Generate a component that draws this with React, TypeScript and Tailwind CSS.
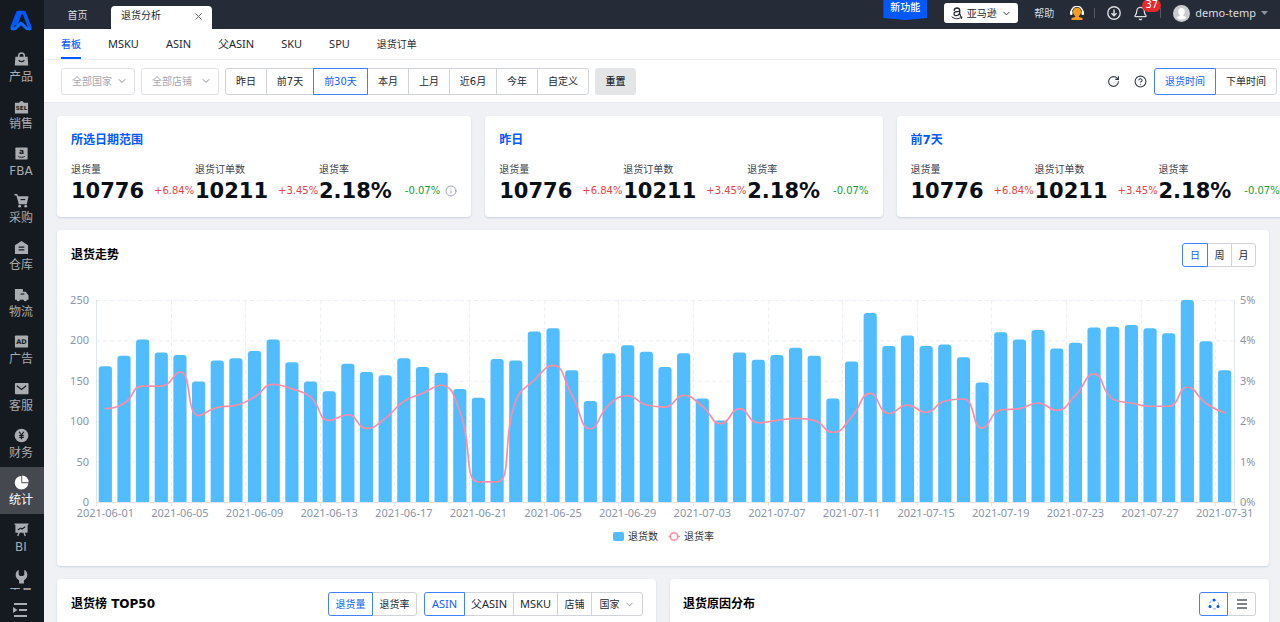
import React, { useState } from "react";
import { CircleHelp, RotateCw, ChevronDown, X, Bell, Info } from "lucide-react";

const BARS = [
  168, 181, 201, 185, 182, 149, 175, 178, 187, 201, 173, 149, 137, 171, 161, 157, 178, 167, 160, 140,
  129, 177, 175, 211, 215, 163, 125, 184, 194, 186, 167, 184, 128, 101, 185, 176, 182, 191, 181, 128,
  174, 234, 193, 206, 193, 195, 179, 148, 210, 201, 213, 190, 197, 216, 217, 219, 215, 209, 250, 199, 163,
];

const RATES = [
  2.31, 2.44, 2.87, 2.87, 3.22, 2.14, 2.34, 2.39, 2.6, 2.91, 2.8, 2.6, 2.02, 2.16, 1.82, 2.07, 2.49, 2.69, 2.89, 2.25,
  0.5, 0.5, 2.5, 3.02, 3.38, 2.66, 1.81, 2.41, 2.63, 2.4, 2.35, 2.64, 2.37, 1.94, 2.31, 1.96, 2.02, 2.07, 2.02, 1.72,
  2.1, 2.69, 2.19, 2.4, 2.22, 2.5, 2.55, 1.83, 2.28, 2.31, 2.45, 2.27, 2.64, 3.17, 2.55, 2.45, 2.37, 2.37, 2.84, 2.44, 2.21,
];

const PLOT = { left: 39, right: 1177, top: 20, bottom: 222 };
const STEP = (PLOT.right - PLOT.left) / BARS.length;

type Point = [number, number];

const clamp = (v: number, a: number, b: number) => Math.max(Math.min(v, Math.max(a, b)), Math.min(a, b));

function smoothPath(points: Point[]): string {
  let d = `M${points[0][0]},${points[0][1]}`;
  let cp0: Point = points[0];
  for (let i = 1; i < points.length; i++) {
    const [x, y] = points[i];
    const prev = points[i - 1];
    const next = points[i + 1];
    let cp1: Point = [x, y];
    let nextCp: Point = [x, y];
    if (next) {
      const lenPrev = Math.hypot(x - prev[0], y - prev[1]);
      const lenNext = Math.hypot(next[0] - x, next[1] - y);
      const ratio = lenNext / (lenNext + lenPrev);
      const nx = clamp(x + (next[0] - prev[0]) * 0.5 * ratio, x, next[0]);
      const ny = clamp(y + (next[1] - prev[1]) * 0.5 * ratio, y, next[1]);
      const cx = clamp(x - ((nx - x) * lenPrev) / lenNext, prev[0], x);
      const cy = clamp(y - ((ny - y) * lenPrev) / lenNext, prev[1], y);
      cp1 = [cx, cy];
      nextCp = [x + ((x - cx) * lenNext) / lenPrev, y + ((y - cy) * lenNext) / lenPrev];
    }
    d += `C${cp0[0]},${cp0[1]} ${cp1[0]},${cp1[1]} ${x},${y}`;
    cp0 = nextCp;
  }
  return d;
}

function dayLabel(index: number): string {
  return new Date(Date.UTC(2021, 5, 1 + index)).toISOString().slice(0, 10);
}

function TrendChart() {
  const height = PLOT.bottom - PLOT.top;
  const points = RATES.map((r, i): Point => [PLOT.left + STEP * (i + 0.5), PLOT.bottom - (r / 5) * height]);
  const ticks = BARS.map((_, i) => i).filter((i) => i % 4 === 0);
  return (
    <svg viewBox="0 0 1212 272" role="img" aria-label="退货走势" className="block w-full font-['Noto_Sans','Noto_Sans_CJK_SC',sans-serif]">
      <g stroke="#eceff8" strokeDasharray="4 3">
        {[0, 1, 2, 3, 4].map((n) => (
          <line key={n} x1={PLOT.left} x2={PLOT.right} y1={PLOT.top + (n * height) / 5 + 0.5} y2={PLOT.top + (n * height) / 5 + 0.5} />
        ))}
        {ticks.slice(1).map((i) => (
          <line key={i} x1={Math.round(PLOT.left + STEP * i) + 0.5} x2={Math.round(PLOT.left + STEP * i) + 0.5} y1={PLOT.top} y2={PLOT.bottom} />
        ))}
      </g>
      <g stroke="#dfe5f1">
        <path fill="none" d={`M${PLOT.left + 0.5},${PLOT.top}V${PLOT.bottom + 4}M${PLOT.right + 0.5},${PLOT.top}V${PLOT.bottom + 4}`} />
        {ticks.slice(1).map((i) => (
          <line key={i} x1={Math.round(PLOT.left + STEP * i) + 0.5} x2={Math.round(PLOT.left + STEP * i) + 0.5} y1={PLOT.bottom} y2={PLOT.bottom + 4} />
        ))}
      </g>
      <g fill="#51bdff">
        {BARS.map((v, i) => {
          const x = PLOT.left + STEP * (i + 0.5) - 6.6;
          const y = PLOT.bottom - (v / 250) * height;
          return <path key={i} d={`M${x},${PLOT.bottom}V${y + 3}q0,-3 3,-3h7.2q3,0 3,3V${PLOT.bottom}z`} />;
        })}
      </g>
      <line x1={PLOT.left} x2={PLOT.right + 1} y1={PLOT.bottom + 0.5} y2={PLOT.bottom + 0.5} stroke="#dfe5f1" />
      <path d={smoothPath(points)} fill="none" stroke="#ff8ca5" strokeWidth="1.7" strokeLinecap="round" />
      <g fill="#8b95a7" fontSize="11">
        {[250, 200, 150, 100, 50, 0].map((v, n) => (
          <text key={v} x={32} y={PLOT.top + (n * height) / 5 + 4} textAnchor="end">{v}</text>
        ))}
        {[5, 4, 3, 2, 1, 0].map((v, n) => (
          <text key={v} x={1183} y={PLOT.top + (n * height) / 5 + 4}>{v}%</text>
        ))}
        {ticks.map((i) => (
          <text key={i} x={PLOT.left + STEP * (i + 0.5)} y={237} textAnchor="middle">{dayLabel(i)}</text>
        ))}
      </g>
      <rect x="556" y="252" width="11" height="9" rx="2" fill="#51bdff" />
      <path d="M611.500,256.500H623" stroke="#ff8ca5" strokeWidth="1.500" />
      <circle cx="617" cy="256.500" r="3.700" fill="#fff" stroke="#ff8ca5" strokeWidth="1.500" />
      <g fill="#333" fontSize="10">
        <text x="571" y="260">退货数</text>
        <text x="627" y="260">退货率</text>
      </g>
    </svg>
  );
}

const dark = "#141a20";

const NAV: { label: string; icon: React.ReactNode }[] = [
  { label: "产品", icon: <><path d="M1.500 5h13l.7 9.500H.8z" fill="currentColor" /><path d="M5 5.500V4a3 3 0 0 1 6 0v1.500" fill="none" stroke="currentColor" strokeWidth="1.600" /><path d="M5 8.500c1 2.500 5 2.500 6 0" fill="none" stroke={dark} strokeWidth="1.300" /></> },
  { label: "销售", icon: <><path d="M1 4h4.500a2.600 2.600 0 0 1 5 0H15v11.500H1z" fill="currentColor" /><text x="8" y="12" textAnchor="middle" fontSize="6" fontWeight="700" fill={dark}>SEL</text></> },
  { label: "FBA", icon: <><rect x="1.500" y="1.500" width="13" height="13" rx="1" fill="currentColor" /><text x="8" y="9" textAnchor="middle" fontSize="8" fontWeight="700" fill={dark}>a</text><path d="M4.500 11c2 1.500 5 1.500 7 0" fill="none" stroke={dark} /></> },
  { label: "采购", icon: <><path d="M.5 1h3l.9 2.500H15.500L14 10.500H4.800L2.500 2.600H.5zM4.800 10.500h9v1.600h-9z" fill="currentColor" /><circle cx="6" cy="14" r="1.500" fill="currentColor" /><circle cx="12.500" cy="14" r="1.500" fill="currentColor" /><path d="M7 7h5" stroke={dark} strokeWidth="1.200" /></> },
  { label: "仓库", icon: <><path d="M1 5.500l7-4.500 7 4.500V15H1z" fill="currentColor" /><path d="M5 7.500h6M5 10.500h6" stroke={dark} strokeWidth="1.300" /></> },
  { label: "物流", icon: <><path d="M1 2h8.500v3h3L15.500 9v4.500H1z" fill="currentColor" /><circle cx="4.500" cy="13.500" r="1.700" fill="currentColor" /><circle cx="12" cy="13.500" r="1.700" fill="currentColor" /><path d="M7 7.500h4" stroke={dark} strokeWidth="1.200" /></> },
  { label: "广告", icon: <><rect x="1" y="1.500" width="14" height="13" rx="1" fill="currentColor" /><text x="8" y="10.500" textAnchor="middle" fontSize="7" fontWeight="700" fill={dark}>AD</text></> },
  { label: "客服", icon: <><rect x="1" y="2" width="14.500" height="12" rx="1" fill="currentColor" /><path d="M3 5l5 4 5-4" fill="none" stroke={dark} strokeWidth="1.300" /></> },
  { label: "财务", icon: <><circle cx="8" cy="8" r="7.300" fill="currentColor" /><path d="M5.500 4L8 7.500 10.500 4M8 7.500V12M5.500 8h5M5.500 10h5" fill="none" stroke={dark} strokeWidth="1.200" /></> },
  { label: "统计", icon: <><path d="M7.800 1v7.700h7.500A7.300 7.300 0 1 1 7.800 1z" fill="currentColor" /><path d="M8.700.5A7 7 0 0 1 15.600 7.700H8.700z" fill="currentColor" /></> },
  { label: "BI", icon: <><path d="M.5 1.500h15v1.500h-1v8.500h-13V3h-1z" fill="currentColor" /><path d="M4 8.500l3-2 1.500 1L12 5" fill="none" stroke={dark} strokeWidth="1.200" /><path d="M5.500 11L4 15M10.500 11l1.500 4" stroke="currentColor" strokeWidth="1.500" /></> },
  { label: "工具", icon: <path d="M5 .8A6.300 6.300 0 0 0 5.400 12v3.500h5.200V12A6.300 6.300 0 0 0 11 .8V6L9.500 7.500h-3L5 6z" fill="currentColor" /> },
];

function Sidebar() {
  return (
    <aside className="flex w-11 shrink-0 flex-col bg-[#141a20] text-[#a9acb0]">
      <a href="#" aria-label="首页" className="flex h-11 shrink-0 justify-center pt-[9px] pr-0.5">
        <svg viewBox="0 0 24 22" className="h-[23px] w-6">
          <path d="M2.800 18.700L9 3h2.300L6.700 15.500" fill="none" stroke="#0058ff" strokeWidth="3.600" strokeLinejoin="round" />
          <path d="M21.200 18.700L15 3h-4l.8 2" fill="none" stroke="#0058ff" strokeWidth="3.600" strokeLinejoin="round" />
          <path d="M3 19.200h3.200L11.300 14.300Q12 13.600 12.700 14.300L17.800 19.200H21" fill="none" stroke="#0c6bff" strokeWidth="3" strokeLinecap="round" strokeLinejoin="round" />
        </svg>
      </a>
      <nav className="min-h-0 flex-1 overflow-hidden">
        {NAV.map((item) => (
          <a
            key={item.label}
            href="#"
            className={`flex h-[47px] flex-col items-center pt-2 pr-0.5 ${item.label === "统计" ? "bg-[#45494f] text-white" : ""}`}
          >
            <svg viewBox="0 0 16 16" className="h-[15px] w-[15px] shrink-0">{item.icon}</svg>
            <span className="text-[12px] leading-5">{item.label}</span>
          </a>
        ))}
      </nav>
      <button aria-label="展开菜单" className="flex h-8 shrink-0 items-center justify-center pt-2 pr-1">
        <svg viewBox="0 0 15 14" className="h-[14px] w-[15px]">
          <path d="M1 1h13M6 7h8M1 13h13" stroke="currentColor" strokeWidth="1.800" />
          <path d="M0 4l4.500 3L0 10z" fill="currentColor" />
        </svg>
      </button>
    </aside>
  );
}

function Header() {
  return (
    <header className="flex h-[29px] shrink-0 items-start bg-[#252b37] text-[10px] text-[#dcdee1]">
      <a href="#" className="flex h-full w-[67px] items-center justify-center pt-0.5">首页</a>
      <div className="mt-1.5 flex h-[23px] w-[101px] items-center justify-between rounded-t-[4px] bg-white pr-2 pb-1 pl-2.5 text-[#222831]">
        <span>退货分析</span>
        <button aria-label="关闭" className="pt-0.5"><X size={11} className="text-[#59606b]" /></button>
      </div>
      <div className="ml-auto flex h-[26px] items-center pr-3">
        <div className="flex h-5 w-11 justify-center self-start bg-[#0058ff] pt-0.5 leading-3 font-medium text-white [clip-path:polygon(0_0,100%_0,100%_90%,50%_100%,0_90%)]">
          新功能
        </div>
        <button className="ml-[17px] flex h-5 w-[74px] items-center justify-center gap-1 rounded-[3px] bg-white text-[#222831]">
          <svg viewBox="0 0 12 13" className="h-[13px] w-3" fill="none" stroke="currentColor" strokeLinecap="round">
            <path d="M3.200 3.300C3.400 1.700 4.500 1 6 1c1.800 0 2.700.8 2.700 2.300v3.500c0 .7.300 1 .8 1.500M8.600 4.300C5 4.200 3 4.900 3 6.700c0 2.600 4.300 2.600 5.600-.4" strokeWidth="1.300" />
            <path d="M1 10c2.700 2.200 6.800 2.300 9.600.3M9.200 9.700l1.800.2-.4 1.700" strokeWidth="1" />
          </svg>
          <span>亚马逊</span>
          <ChevronDown size={11} />
        </button>
        <a href="#" className="ml-4">帮助</a>
        <button aria-label="客服" className="ml-4">
          <svg viewBox="0 0 14 14" className="h-[14px] w-[14px]">
            <path d="M1.300 7.500V6a5.700 5.700 0 0 1 11.400 0v1.500" fill="none" stroke="#fff" strokeWidth="1.300" />
            <rect y="5" width="2.500" height="4" rx="1" fill="#fff" />
            <rect x="11.500" y="5" width="2.500" height="4" rx="1" fill="#fff" />
            <path d="M7 1.800a4 4 0 0 1 4 4c0 2-1 3.400-2.200 4.200v.9l3.700 1V14h-11v-2.100l3.700-1V10C4 9.200 3 7.800 3 5.800a4 4 0 0 1 4-4z" fill="#fb9a1c" />
          </svg>
        </button>
        <span className="ml-2.5 h-2.5 w-px bg-[#535966]" />
        <button aria-label="下载" className="ml-3">
          <svg viewBox="0 0 14 14" className="h-[14px] w-[14px]" fill="none" stroke="currentColor">
            <circle cx="7" cy="7" r="6.200" strokeWidth="1.400" />
            <path d="M7 3.500V9.500M4.500 7.200L7 9.700l2.500-2.500" strokeWidth="1.500" />
          </svg>
        </button>
        <button aria-label="通知" className="relative ml-3">
          <Bell size={15} />
          <span className="absolute -top-[7px] left-[9px] flex h-[13px] w-[19px] items-center justify-center rounded-full bg-[#e5292f] text-[10px] leading-none text-white">37</span>
        </button>
        <span className="ml-3 h-2.5 w-px bg-[#535966]" />
        <button className="ml-3 flex items-center gap-[5px] font-['Noto_Sans',sans-serif] text-[11px]">
          <svg viewBox="0 0 17 17" className="h-[17px] w-[17px]">
            <circle cx="8.500" cy="8.500" r="8.500" fill="#c9cbce" />
            <path d="M8.500 3c2.200 0 3.300 1.500 3.300 3.500 0 1.500-.7 2.700-1.500 3.300v.9l3.400 1.500c-2.500 3-7.900 3-10.400 0l3.400-1.500v-.9C5.900 9.200 5.200 8 5.200 6.500 5.200 4.500 6.300 3 8.500 3z" fill="#fff" />
          </svg>
          <span>demo-temp</span>
          <svg viewBox="0 0 7 4" className="h-1 w-[7px]"><path d="M0 0h7L3.500 4z" fill="#8f949c" /></svg>
        </button>
      </div>
    </header>
  );
}

function Segmented({ items, initial, label, size }: { items: { text: React.ReactNode; width: string; name?: string }[]; initial: number; label: string; size: string }) {
  const [active, setActive] = useState(initial);
  return (
    <div role="group" aria-label={label} className="flex">
      {items.map((item, i) => (
        <button
          key={i}
          aria-label={item.name}
          aria-pressed={active === i}
          onClick={() => setActive(i)}
          className={`-ml-px flex items-center justify-center border first:ml-0 first:rounded-l-[3px] last:rounded-r-[3px] ${size} ${item.width} ${
            active === i ? "z-10 border-[#3f83ff] text-[#0f62fe]" : "border-[#d0d3d8] text-[#222831]"
          }`}
        >
          {item.text}
        </button>
      ))}
    </div>
  );
}

function FilterSelect({ label, width }: { label: string; width: string }) {
  return (
    <label className={`relative flex h-[27px] items-center ${width}`}>
      <select aria-label={label} className="h-full w-full appearance-none rounded-[3px] border border-[#dfe1e6] bg-white pl-2.5 text-[10px] text-[#a3a8b3]">
        <option>{label}</option>
      </select>
      <ChevronDown size={12} className="pointer-events-none absolute right-[7px] text-[#858c99]" />
    </label>
  );
}

const TABS = ["看板", "MSKU", "ASIN", "父ASIN", "SKU", "SPU", "退货订单"];
const latin = "font-['Noto_Sans','Noto_Sans_CJK_SC',sans-serif] text-[11px]";

function Toolbar() {
  return (
    <>
      <nav className="flex h-[31px] shrink-0 gap-[27px] border-b border-[#eff0f3] bg-white pl-[17px]">
        {TABS.map((tab, i) => (
          <a
            key={tab}
            href="#"
            className={`flex items-center border-b-2 pt-0.5 ${/[A-Z]/.test(tab) ? latin : "text-[10px]"} ${i === 0 ? "border-[#0058ff] font-medium text-[#0f62fe]" : "border-transparent text-[#222831]"}`}
          >
            {tab}
          </a>
        ))}
      </nav>
      <div className="flex h-[43px] shrink-0 items-center border-b border-[#e8eaee] bg-white pr-[3px] pl-[17px]">
        <div className="flex items-center gap-1.5">
          <FilterSelect label="全部国家" width="w-[74px]" />
          <FilterSelect label="全部店铺" width="w-[78px]" />
          <Segmented
            label="日期范围"
            initial={2}
            size="h-[27px]"
            items={[
              { text: "昨日", width: "w-[42px]" },
              { text: "前7天", width: "w-12" },
              { text: "前30天", width: "w-[55px]" },
              { text: "本月", width: "w-[42px]" },
              { text: "上月", width: "w-[42px]" },
              { text: "近6月", width: "w-12" },
              { text: "今年", width: "w-[42px]" },
              { text: "自定义", width: "w-[52px]" },
            ]}
          />
          <button className="h-[27px] w-[41px] rounded-[3px] bg-[#e4e5e7] font-medium text-[#222831]">重置</button>
        </div>
        <div className="ml-auto flex items-center">
          <button aria-label="刷新" className="mr-3.5"><RotateCw size={13} className="text-[#333a44]" /></button>
          <button aria-label="帮助" className="mr-[7px]"><CircleHelp size={13} className="text-[#333a44]" /></button>
          <Segmented
            label="时间类型"
            initial={0}
            size="h-[27px]"
            items={[
              { text: "退货时间", width: "w-[62px]" },
              { text: "下单时间", width: "w-[62px]" },
            ]}
          />
        </div>
      </div>
    </>
  );
}

const METRICS = [
  { label: "退货量", value: "10776", change: "+6.84%", up: true },
  { label: "退货订单数", value: "10211", change: "+3.45%", up: true },
  { label: "退货率", value: "2.18%", change: "-0.07%", up: false },
];

const card = "rounded-[4px] bg-white shadow-[0_1px_2px_rgba(40,80,140,0.18)]";

function SummaryCard({ title, info }: { title: string; info?: boolean }) {
  return (
    <section className={`${card} shrink-0 px-3.5 pt-[15px] pb-3.5`}>
      <h2 className="text-[12px] leading-[18px] font-bold text-[#0058ff]">{title}</h2>
      <dl className="mt-3 flex">
        {METRICS.map((m) => (
          <div key={m.label} className="w-[124px] last:w-auto">
            <dt className="text-[10px] leading-[18px] text-[#3c434e]">{m.label}</dt>
            <dd className={`flex items-center leading-6 whitespace-nowrap ${m.up ? "gap-2.5" : "gap-[13px]"}`}>
              <span className="text-[21px] font-bold text-[#0b0f16]">{m.value}</span>
              <span className={`flex items-center gap-[5px] text-[10px] ${m.up ? "text-[#ea3f45]" : "text-[#169c34]"}`}>
                {m.change}
                {info && !m.up && <Info size={12} className="text-[#9aa5ba]" />}
              </span>
            </dd>
          </div>
        ))}
      </dl>
    </section>
  );
}

function Heading({ children }: { children: React.ReactNode }) {
  return <h2 className="text-[12px] font-bold text-black">{children}</h2>;
}

export default function App() {
  return (
    <div className="flex h-screen overflow-hidden bg-[#eff1f5] font-['DejaVu_Sans','Noto_Sans_CJK_SC',sans-serif] text-[10px]">
      <Sidebar />
      <div className="flex min-w-0 flex-1 flex-col">
        <Header />
        <Toolbar />
        <main className="min-h-0 flex-1 overflow-hidden py-[13px] pl-[13px]">
          <div className="flex gap-3.5">
            <SummaryCard title="所选日期范围" info />
            <SummaryCard title="昨日" />
            <SummaryCard title="前7天" />
          </div>
          <section className={`${card} mt-[13px] mr-[11px] pb-3.5`}>
            <div className="flex h-[50px] items-center justify-between pr-[13px] pl-3.5">
              <Heading>退货走势</Heading>
              <Segmented
                label="时间粒度"
                initial={0}
                size="h-6"
                items={[
                  { text: "日", width: "w-[26px]" },
                  { text: "周", width: "w-[25px]" },
                  { text: "月", width: "w-[25px]" },
                ]}
              />
            </div>
            <TrendChart />
          </section>
          <div className="mt-[13px] mr-[11px] grid grid-cols-2 gap-3.5">
            <section className={`${card} h-80`}>
              <div className="flex h-[50px] items-center pr-[13px] pl-3.5">
                <Heading>退货榜 TOP50</Heading>
                <div className="ml-auto flex gap-[7px]">
                  <Segmented
                    label="排行指标"
                    initial={0}
                    size="h-6"
                    items={[
                      { text: "退货量", width: "w-[45px]" },
                      { text: "退货率", width: "w-[45px]" },
                    ]}
                  />
                  <Segmented
                    label="排行维度"
                    initial={0}
                    size="h-6"
                    items={[
                      { text: <span className={latin}>ASIN</span>, width: "w-[41px]" },
                      { text: <span className={latin}>父ASIN</span>, width: "w-[50px]" },
                      { text: <span className={latin}>MSKU</span>, width: "w-[45px]" },
                      { text: "店铺", width: "w-[35px]" },
                      { text: <span className="flex items-center gap-1">国家<ChevronDown size={11} className="text-[#858c99]" /></span>, width: "w-[52px]" },
                    ]}
                  />
                </div>
              </div>
            </section>
            <section className={`${card} h-80`}>
              <div className="flex h-[50px] items-center justify-between pr-[13px] pl-[13px]">
                <Heading>退货原因分布</Heading>
                <Segmented
                  label="显示方式"
                  initial={0}
                  size="h-6"
                  items={[
                    {
                      name: "图表",
                      width: "w-[29px]",
                      text: (
                        <svg viewBox="0 0 12 12" className="h-3 w-3">
                          <circle cx="6" cy="6.500" r="4.500" fill="none" stroke="#6ea4ff" strokeDasharray="3 2" />
                          <circle cx="6" cy="2" r="1.500" fill="#0058ff" />
                          <circle cx="2" cy="8.500" r="1.500" fill="#0058ff" />
                          <circle cx="10" cy="8.500" r="1.500" fill="#0058ff" />
                        </svg>
                      ),
                    },
                    {
                      name: "列表",
                      width: "w-[29px]",
                      text: (
                        <svg viewBox="0 0 10 10" className="h-2.5 w-2.5">
                          <path d="M0 1h10M0 5h10M0 9h10" stroke="#555b65" strokeWidth="1.400" />
                        </svg>
                      ),
                    },
                  ]}
                />
              </div>
            </section>
          </div>
        </main>
      </div>
    </div>
  );
}
